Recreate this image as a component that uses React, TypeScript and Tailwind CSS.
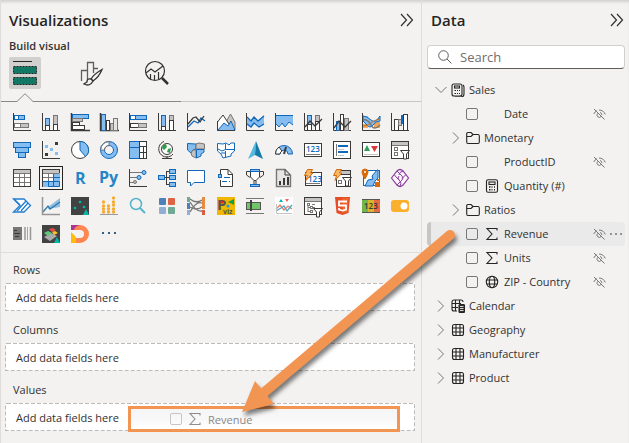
import React, { ReactNode } from "react";

const D = "#3b3a39";
const B = "#1168b8";
const F = "#85bdf0";
const G = "#797775";
const L = "#c6c4c2";
const O = "#d86b08";
const V = "#8b3c9e";

type BoxProps = { x: number; y: number; w: number; h: number; f?: string; s?: string };

/* Rectangle whose 1px outline sits inside its bounds. */
function Box({ x, y, w, h, f = "#fff", s }: BoxProps) {
  return s ? (
    <rect x={x + 0.5} y={y + 0.5} width={w - 1} height={h - 1} fill={f} stroke={s} />
  ) : (
    <rect x={x} y={y} width={w} height={h} fill={f} />
  );
}

function Ln({ d, s = D, f = "none", w = 1 }: { d: string; s?: string; f?: string; w?: number }) {
  return <path d={d} stroke={s} fill={f} strokeWidth={w} />;
}

const Axes = () => <Ln d="M.5 0V17.5H18" />;
const Bolt = () => <Ln d="M3.5 .5H8.5L6.5 4H9L2 11.5L3.5 6.5H.5Z" f="#f7b765" s={O} />;
const Funnel = ({ y = 8 }: { y?: number }) => (
  <Ln d={`M9.5 ${y + 0.5}H18.5L15.5 ${y + 4}V${y + 9}H12.5V${y + 4}Z`} f="#fff" />
);
const Digits = ({ x, y, size, fill }: { x: number; y: number; size: number; fill: string }) => (
  <text x={x} y={y} fontSize={size} fill={fill} fontFamily="Open Sans, sans-serif" fontWeight="600">
    123
  </text>
);

const visuals: [string, ReactNode][] = [
  ["Stacked bar chart", <><Axes /><Box x={1} y={2} w={5} h={5} s={B} /><Box x={5} y={2} w={7} h={5} f={F} s={B} /><Box x={1} y={10} w={7} h={5} s={G} /><Box x={7} y={10} w={9} h={5} f={L} s={G} /></>],
  ["Stacked column chart", <><Axes /><Box x={3} y={5} w={5} h={8} f={F} s={B} /><Box x={3} y={12} w={5} h={6} s={D} /><Box x={11} y={2} w={5} h={10} f={L} s={G} /><Box x={11} y={11} w={5} h={7} s={D} /></>],
  ["Clustered bar chart", <><Ln d="M.5 0V17.5H19" w={1.5} /><Box x={1} y={1} w={17} h={5} f={F} s={B} /><Box x={1} y={5} w={11} h={4} f={L} s={G} /><Box x={1} y={9} w={8} h={4} s={D} /><Box x={1} y={12} w={13} h={5} s={D} /></>],
  ["Clustered column chart", <><Ln d="M.5 0V17.5H19" w={1.5} /><Box x={1} y={1} w={5} h={17} f={F} s={B} /><Box x={6} y={7} w={4} h={11} s={D} /><Box x={10} y={10} w={4} h={8} f={L} s={G} /><Box x={13} y={5} w={5} h={13} f="#e5e4e3" s={G} /></>],
  ["100% stacked bar chart", <><Axes /><Box x={1} y={2} w={6} h={5} s={B} /><Box x={6} y={2} w={12} h={5} f={F} s={B} /><Box x={1} y={10} w={9} h={5} s={D} /><Box x={9} y={10} w={9} h={5} f={L} s={G} /></>],
  ["100% stacked column chart", <><Axes /><Box x={3} y={2} w={5} h={12} f={F} s={B} /><Box x={3} y={13} w={5} h={5} s={D} /><Box x={11} y={2} w={5} h={6} f={L} s={G} /><Box x={11} y={7} w={5} h={11} s={D} /></>],
  ["Line chart", <><Axes /><Ln d="M1 14L7 8L11 10L14 5L18 8" s={B} w={1.3} /><Ln d="M1 11L6 5L9 4L13 9L17 3" w={1.3} /></>],
  ["Area chart", <><Ln d="M9 9L13.5 1L18 9V17.5Z" f={L} s={G} /><Ln d="M.5 17V9L6 2L12 11L17 17.5Z" f="#fff" /><Ln d="M1 17L7 10L11 13L14 8L17.5 16V17.5H1Z" f={F} s={B} /><Ln d="M.5 8V17.5H18" /></>],
  ["Stacked area chart", <><Ln d="M1 5L5 8L8 4L12 8L18 2V11L14 14L8 10L5 14L1 11Z" f={F} s="none" /><Ln d="M1 4L5 8L8 4L12 8L18 3M1 11L5 14L8 10L13 14L18 11" s={B} w={1.3} /><Axes /></>],
  ["100% stacked area chart", <><Ln d="M1 2H18V12L14 9L10 14L6 10L4 14L1 11Z" f={F} s="none" /><Ln d="M1 2.5H18M1 11L4 14L7 10L10 14L14 9L18 12" s={B} /><Axes /></>],
  ["Line and stacked column chart", <><Axes /><Box x={3} y={2} w={5} h={11} f={F} s={B} /><Box x={3} y={11} w={5} h={7} s={D} /><Box x={11} y={2} w={5} h={7} f={L} s={G} /><Box x={11} y={8} w={5} h={10} s={D} /><Ln d="M1 14L6 8L11 13L18 6" w={1.3} /></>],
  ["Line and clustered column chart", <><Axes /><Box x={3} y={8} w={4} h={10} f={F} s={B} /><Box x={7} y={1} w={4} h={17} s={D} /><Box x={11} y={5} w={5} h={13} f={L} s={G} /><Ln d="M1 15L6 8L12 14L18 8" w={1.3} /></>],
  ["Ribbon chart", <><Box x={1} y={3} w={5} h={4} f={L} /><Box x={1} y={11} w={5} h={4} f="#f2a65a" /><Box x={12} y={9} w={6} h={6} f="#f2a65a" /><Ln d="M1 3Q5 3 9 7T18 3V8Q14 8 11 12T5 12L1 8Z" f={F} s={B} /><Ln d="M1 13Q6 13 9 10T18 6" s={O} /><Ln d="M1 7Q6 6 9 12T18 12" s={G} w={1.5} /><Axes /></>],
  ["Waterfall chart", <><Axes /><Box x={3} y={6} w={5} h={12} s={D} /><Box x={7} y={6} w={4} h={7} f={L} s={G} /><Box x={10} y={2} w={3} h={9} f={B} /><Box x={12} y={1} w={5} h={17} s={D} /></>],

  ["Funnel", <><Box x={0} y={1} w={18} h={6} f={F} s={B} /><Box x={2} y={6} w={14} h={6} f={F} s={B} /><Box x={5} y={11} w={8} h={6} f={F} s={B} /></>],
  ["Scatter chart", <><Axes /><Box x={13} y={1} w={3} h={3} f={D} /><Box x={3} y={4} w={3} h={3} f={F} /><Box x={8} y={7} w={3} h={3} f={F} /><Box x={13} y={11} w={3} h={3} f={F} /><Box x={3} y={12} w={3} h={3} f={D} /></>],
  ["Pie chart", <><circle cx="9" cy="9" r="8.5" fill="#fff" stroke={D} /><Ln d="M9 9V.5A8.5 8.5 0 0 1 14.5 15.5Z" f={F} s={B} /></>],
  ["Donut chart", <><circle cx="9" cy="9" r="6.5" fill="none" stroke={F} strokeWidth="4" /><Ln d="M2.5 9A6.5 6.5 0 0 1 9 2.5" s="#fff" w={4} /><circle cx="9" cy="9" r="8.5" fill="none" stroke={B} /><circle cx="9" cy="9" r="4.5" fill="none" stroke={B} /><Ln d="M.5 9A8.5 8.5 0 0 1 9 .5V4.5A4.5 4.5 0 0 0 4.5 9Z" s={G} /></>],
  ["Treemap", <><Box x={0} y={0} w={18} h={18} s={D} /><Box x={0} y={0} w={11} h={7} f={F} s={B} /><Box x={0} y={6} w={11} h={12} f={F} s={B} /><Ln d="M10.5 0V18M10 5.5H18M10 11.5H18M14.5 5V18" /></>],
  ["Map", <><circle cx="9" cy="8" r="5.5" fill="#fff" stroke={D} /><Ln d="M5 4L8 3L9 6L6 9L4 7ZM10 8L13 7L12 12L9 11Z" f="#2e9b4a" s="none" /><Ln d="M6 .5A8 8 0 1 0 15 13M9 15V17.5M4 17.5H14" /></>],
  ["Filled map", <><Ln d="M.5 2.500L9 3V8L6 9L4 12L.5 9Z" f={F} s={B} /><Ln d="M9 3L12 2L17.5 3V8H9ZM4 12L6 9H9V17L5 15Z" f={L} s={G} /><Ln d="M9.5 8.5H17V11L14 13V15L9.5 17Z" f={F} s={B} /></>],
  ["Shape map", <><Ln d="M.5 2.5L6 3L9 2L12 4L14 2H17.5V10L14 13V15L6 17L4 13L.5 10Z" f="#fff" s={B} /><Ln d="M8.5 3V8.5H17M1 8L5 10L8.5 8.5M8.5 10V16M4 12H8" s={B} /></>],
  ["Azure map", <><path d="M10 0L2 18L9 14Z" fill="#55b9df" /><path d="M10 0L17 18L9 14Z" fill="#1679a7" /></>],
  ["Gauge", <><Ln d="M.5 13A8.5 8.5 0 0 1 17.5 13H13A4 4 0 0 0 5 13Z" f={F} s={B} /><Ln d="M.5 13A8.5 8.5 0 0 1 4 6L7 10A4 4 0 0 0 5 13Z" f="#fff" /><Ln d="M11 6L9 13" w={2} /></>],
  ["Card", <><Box x={0} y={2} w={18} h={14} s={D} /><Digits x={2} y={11} size={8} fill={B} /><Ln d="M2 13.5H16" s={G} /></>],
  ["Multi-row card", <><Box x={0} y={0} w={18} h={18} s={D} /><Ln d="M3.5 3V15" s={G} /><Ln d="M5 5H15M5 11H15" s={B} w={2} /><Ln d="M5 8.5H11M5 14.5H11" s={L} /></>],
  ["KPI", <><Box x={0} y={1} w={18} h={15} s={D} /><path d="M2 10H8L5 4Z" fill="#319b58" /><path d="M9 5H16L12.5 11Z" fill="#dc3a3a" /><Ln d="M2 13.5H16" s={L} /></>],
  ["Slicer", <><Box x={0} y={0} w={18} h={18} s={D} /><Box x={1} y={1} w={16} h={3} f={L} /><Ln d="M1 4.5H17" s={G} /><Box x={3} y={6} w={4} h={4} s={G} /><Box x={3} y={11} w={4} h={4} s={G} /><Funnel y={9} /></>],

  ["Table", <><Box x={0} y={0} w={18} h={18} s={D} /><Box x={1} y={1} w={16} h={3} f={L} /><Ln d="M1 4.5H17M1 8.5H17M1 13.5H17M6.5 4V17M11.5 4V17" s={G} /></>],
  ["Matrix", <><Box x={0} y={0} w={18} h={18} s={D} /><Box x={1} y={1} w={16} h={3} f={L} /><Box x={12} y={4} w={6} h={14} f={F} /><Box x={1} y={13} w={17} h={5} f={F} /><Ln d="M1 4.5H17M1 8.5H12M6.5 4V13M11.5 4V13" s={G} /><Ln d="M12 8.5H18M1 12.5H17.5V17.5H6.5V12M11.5 5V17" s={B} /></>],
  ["R script visual", <text x="4" y="15" fontSize="16" fontWeight="700" fill="#2486c8" fontFamily="Open Sans, sans-serif">R</text>],
  ["Python visual", <text x="-1" y="14" fontSize="16" fontWeight="700" fill="#2486c8" fontFamily="Open Sans, sans-serif">Py</text>],
  ["Key influencers", <><Ln d="M.5 0V17.5H18" s={D} /><Ln d="M1 3.5H13M1 8.5H8M1 13.5H5" s={G} /><circle cx="15" cy="3.5" r="2" fill={F} stroke={B} /><circle cx="10" cy="8.5" r="2" fill={F} stroke={B} /><circle cx="6" cy="13" r="1.5" fill={L} stroke={G} /></>],
  ["Decomposition tree", <><Ln d="M6 8.5H11M8.5 2.5V15.5M8 2.5H12M8 15.5H12" /><Box x={0} y={6} w={7} h={5} f={F} s={B} /><Box x={11} y={0} w={7} h={5} f={F} s={B} /><Box x={11} y={6} w={7} h={5} f={F} s={B} /><Box x={11} y={13} w={7} h={5} f={F} s={B} /></>],
  ["Q&A", <Ln d="M.5 1.5H17.5V13.5H7L3.5 17V13.5H.5Z" f="#fff" s={B} />],
  ["Smart narrative", <><Ln d="M3.5 5V.5H11L15.5 5V17.5H3.5V11" f="#fff" /><Ln d="M11 .5V5.5H15" /><Box x={1} y={5} w={4} h={4} f={F} s={B} /><Ln d="M7 8.5H13M5 12.5H10M12 12.5H13" s={B} /></>],
  ["Goals", <><Ln d="M4 2.5H.5V6L4 8.5M14 2.5H17.5V6L14 8.5" /><Ln d="M4.5 1V8L8 11.5H10L13.5 8V1ZM8 11.5V15.5M10 11.5V15.5" f="#fff" /><Box x={4} y={0} w={10} h={3} f={F} s={B} /><Box x={4} y={15} w={10} h={3} f={F} s={B} /></>],
  ["Paginated report", <><Ln d="M1.5 .5H10L15.5 6V17.5H1.5Z" f="#e7e6e5" s={G} w={1.4} /><Ln d="M10 .5V6H15" /><Box x={4} y={12} w={2} h={4} f={D} /><Box x={8} y={9} w={2} h={7} f={D} /><Box x={12} y={8} w={2} h={8} f={D} /></>],
  ["New card", <><Box x={1} y={3} w={17} h={14} s={D} /><Digits x={4} y={13} size={8} fill={B} /><Ln d="M2 14.5H16" s={G} /><Bolt /></>],
  ["New slicer", <><Box x={3} y={1} w={15} h={17} s={D} /><Box x={8} y={2} w={9} h={3} f={L} /><Ln d="M8 5.5H17" /><Box x={5} y={11} w={4} h={4} s={G} /><Funnel /><Bolt /></>],
  ["ArcGIS map", <><Box x={1} y={1} w={17} h={16} s={B} /><Ln d="M15 1L10 7L11 10L6 11L3 17H11L13 12L16 9V1Z" s={B} f={F} /><Ln d="M3 0A3 3 0 0 1 6 3Q6 5 3 10Q0 5 0 3A3 3 0 0 1 3 0Z" s={O} f={O} /><circle cx="3" cy="3" r="1" fill="#fff" /><Box x={13} y={13} w={5} h={5} f={O} /><Box x={15} y={10} w={3} h={2} f={O} /></>],
  ["Power Apps", <><Ln d="M.5 9L6 2Q9 -1 12 2L17.500 9L12 16Q9 19 6 16Z" s={V} w={1.2} f="#faf5fb" /><Ln d="M3.5 6L6 9L9 12Q11 14 9 17M6 2L11 7Q13 9 11 11L6 16M12 2Q8 3 8 6M14.5 6L11 9.5M8 7Q6 9 8 11" s={V} /></>],

  ["Power Automate", <><Ln d="M.5 2H11L17.5 8.5L11 15H.5L7 8.5Z" s="#217dd1" f="#fff" w={1.3} /><Ln d="M4 14L13 4M8 14L15 6M1 2L7 8" s="#217dd1" w={1.3} /></>],
  ["Forecast chart", <><path d="M6 10L18 1V10L6 12Z" fill="#90bfe0" /><Ln d="M1 15L6 9L8 12L18 5" s="#2e77ae" w={1.3} /><Ln d="M.5 0V17.5H18" s="#969696" w={1.5} /></>],
  ["Cluster chart", <><Box x={0} y={0} w={18} h={18} f="#414343" /><circle cx="9" cy="5" r="1.3" fill="#00b8aa" /><circle cx="4" cy="11" r="1.3" fill="#00b8aa" /><circle cx="13" cy="10" r="1.3" fill="#00b8aa" /><path d="M12 18L15 12L18 18Z" fill="#00b8aa" /></>],
  ["Dot column chart", <><g fill="#f4ac35">{[5, 9, 12, 15].map(y => <circle key={y} cx="3.5" cy={y} r="1.7" />)}{[9, 12, 15].map(y => <circle key={y} cx="8.5" cy={y} r="1.7" />)}{[1, 5, 8, 12, 15].map(y => <circle key={y} cx="13.5" cy={y} r="1.7" />)}</g><Ln d="M0 17.5H18" s="#9a9a9a" /></>],
  ["Search visual", <><circle cx="7" cy="7" r="5.500" fill="none" stroke="#54b4cb" strokeWidth="1.5" /><Ln d="M11 11L16 16" s="#54b4cb" w={2} /></>],
  ["Tile grid", <><rect x="1" y="1" width="7" height="7" rx="1" fill="#4f81b8" /><rect x="10" y="1" width="7" height="7" rx="1" fill="#dd6546" /><rect x="1" y="10" width="7" height="7" rx="1" fill="#91afd5" /><rect x="10" y="10" width="7" height="7" rx="1" fill="#6eaa94" /></>],
  ["Sankey diagram", <><Ln d="M3 2Q9 7 15 3M3 5Q9 15 15 14M3 15Q9 4 15 6M3 10Q9 14 15 10" s="#737373" w={1.3} /><Box x={0} y={0} w={3} h={5} f="#6eaa94" /><Box x={0} y={6} w={3} h={6} f="#4f81b8" /><Box x={0} y={13} w={3} h={5} f="#91afd5" /><Box x={15} y={0} w={3} h={12} f="#e78a42" /><Box x={15} y={13} w={3} h={5} f="#d85d42" /></>],
  ["Pviz", <><Box x={0} y={0} w={18} h={18} f="#f1b700" /><text x="0" y="13" fontSize="15" fill="#555" fontFamily="Open Sans, sans-serif" fontWeight="700">P<tspan x="6" y="17" fontSize="7">viz</tspan></text><path d="M11 5L17 2V8Z" fill="#1c9b46" /><circle cx="5" cy="5" r="1.5" fill="#e22" /><circle cx="11" cy="9" r="1.5" fill="#189ee0" /></>],
  ["Bullet chart", <><Ln d="M0 1.5H18M0 16.5H18" s="#777" /><Box x={0} y={5} w={15} h={8} f="#71c668" s="#555" /><Box x={4} y={3} w={2} h={11} f="#444" /></>],
  ["Trend card", <><Box x={0} y={0} w={18} h={18} /><path d="M4 5L6 2L8 5Z" fill="#00b8aa" /><path d="M10 2H14L12 5Z" fill="#fd625e" /><Ln d="M1 12L5 8L9 13L13 9L17 12" s="#e58369" w={1.3} /><Ln d="M1 14L6 11L9 9L12 14L17 8" s="#4ba7c8" w={1.3} /><Ln d="M1.5 7V16.5H17" s={L} /></>],
  ["Hierarchy slicer", <><Box x={0} y={0} w={18} h={18} s={D} /><Box x={1} y={1} w={16} h={3} f={L} /><Ln d="M1 4.5H17M4 8V15M4 10.5H7M4 14.5H7M8 7.5H11M9 10.5H11" s={G} /><Box x={3} y={6} w={3} h={3} s={G} /><Box x={6} y={9} w={3} h={3} s={G} /><Box x={6} y={13} w={3} h={3} s={G} /><Funnel y={11} /></>],
  ["HTML content", <><path d="M2 0H17L15.5 16L9.5 18L3.5 16Z" fill="#e44d26" /><path d="M9.5 1H15.5L14.5 15L9.5 16.5Z" fill="#f16529" /><Ln d="M14 4.5H6V8.5H13V12.5L9.5 13.5L6 12.5V11" s="#fff" w={1.8} /></>],
  ["Heat card", <><Box x={0} y={2} w={6} h={14} f="#70b64c" /><Box x={6} y={2} w={6} h={14} f="#d7b52c" /><Box x={12} y={2} w={6} h={14} f="#e86840" /><Ln d="M0 2.5H18M0 15.5H18" s="#555" /><Digits x={2} y={12} size={8} fill="#383838" /></>],
  ["Toggle", <><rect x="0" y="3" width="18" height="12" rx="3" fill="#fbb02d" /><circle cx="13" cy="9" r="3.5" fill="#fff" /></>],

  ["Text table", <><Box x={0} y={2} w={9} h={13} f="#777" /><Ln d="M1 5.5H4M1 8.5H7M2 11.5H6" s="#383838" /><Ln d="M12 2V15M17.5 2V15" s="#999" w={1.5} /><Ln d="M14.5 2V15" s="#7db8c0" /></>],
  ["Layer map", <><Box x={0} y={0} w={18} h={18} f="#414343" /><path d="M2 12L9 8L15 11L8 16Z" fill="#aaa" /><path d="M2 8L6 6L10 8L6 11Z" fill="#64c67d" /><path d="M7 4L11 3L14 5L10 7Z" fill="#e84a3b" /><path d="M10 7L13 6L16 8L12 10Z" fill="#f3c62d" /><path d="M12 18L15 12L18 18Z" fill="#00b8aa" /></>],
  ["Drill down visual", <><path d="M0 0H9A9 9 0 0 1 9 18H5V13H9A4 4 0 0 0 9 5H0Z" fill="#ff8650" /><path d="M0 0H9Q4 1 3 5H0Z" fill="#a93791" /><path d="M0 7L5 12V18H0Z" fill="#ffbd08" /></>],
  ["Get more visuals", <><Box x={2} y={7} w={2} h={2} f="#365e80" /><Box x={8} y={7} w={2} h={2} f="#365e80" /><Box x={14} y={7} w={2} h={2} f="#365e80" /></>],
];

function Expand() {
  return (
    <button aria-label="Collapse pane" className="h-4 w-4">
      <svg viewBox="0 0 16 16" className="h-4 w-4" fill="none" stroke="#323130" strokeWidth="1.2">
        <path d="M2 2L7.500 8L2 14M8 2L13.5 8L8 14" />
      </svg>
    </button>
  );
}

function Well({ label, children }: { label: string; children?: ReactNode }) {
  return (
    <section className="h-15 pt-[7px]">
      <h3 className="px-2 text-[11px] leading-5">{label}</h3>
      <div className="relative mt-[3px] h-7 bg-white px-[11px] text-[11px] leading-[29px]">
        <svg className="absolute inset-0 h-full w-full" aria-hidden="true">
          <rect x="0" y="0" width="100%" height="100%" rx="2" fill="none" stroke="#bdbbb9" strokeWidth="2" strokeDasharray="4 2" />
        </svg>
        Add data fields here
        {children}
      </div>
    </section>
  );
}

type IconName = "model" | "folder" | "calc" | "sum" | "globe" | "table" | "calendar";

const treePaths: Record<IconName, ReactNode> = {
  model: <><rect x="1" y="1" width="10" height="12" rx="2" /><rect x="3.5" y="3" width="5" height="2" /><path d="M3.5 7.5H5M6 7.5H7M8 7.5H9M3.5 10.5H5M6 10.5H7M8 10.5H9M12 2Q13 3 13 4V11Q13 14 10 14H4" /></>,
  folder: <path d="M.7 4V2.5Q.7 1.5 2 1.5H5L7 3.5H12Q13.3 3.5 13.3 5V11Q13.3 12.5 12 12.5H2Q.7 12.5 .7 11ZM1 5.5H5L7 3.5" />,
  calc: <><rect x="1.5" y=".7" width="11" height="12.6" rx="1.5" /><rect x="4" y="3" width="6" height="2.5" /><path d="M4 8H5.5M6.500 8H7.5M9 8H10M4 10.8H5.5M6.5 10.8H7.5M9 10.8H10" strokeWidth="1.5" /></>,
  sum: <path d="M12 3.5V1.5H2L7 7L2 12.5H12V10.5" />,
  globe: <><circle cx="7" cy="7" r="5.7" /><ellipse cx="7" cy="7" rx="2.7" ry="5.7" /><path d="M1.5 5H12.5M1.5 9H12.5" /></>,
  table: <><rect x="1.5" y="1.5" width="11" height="11" rx="2" /><path d="M5 1.5V12.5M9 1.5V12.5M1.5 5H12.5M1.5 9H12.5" /></>,
  calendar: <><path d="M6 12H3Q1 12 1 10V3Q1 1 3 1H10Q12 1 12 3M4.5 1V12M8.5 1V5M1 4.5H10M1 8.5H7" /><rect x="8" y="5.5" width="5.5" height="8" rx="1" fill="#323130" /><path d="M9 7.5H12.5M9 9.5H12.5M9 11.5H12.5" stroke="#fff" strokeWidth=".8" /></>,
};

function TreeIcon({ name }: { name: IconName }) {
  return (
    <svg viewBox="0 0 14 14" className="h-3.5 w-3.5 shrink-0" fill="none" stroke="#252423" strokeWidth="1.1">
      {treePaths[name]}
    </svg>
  );
}

function Chevron({ open = false }: { open?: boolean }) {
  return (
    <svg viewBox="0 0 12 12" className="h-3 w-3 shrink-0" fill="none" stroke="#797775">
      <path d={open ? "M.5 3L6 8.5L11.5 3" : "M3 .5L8.5 6L3 11.5"} />
    </svg>
  );
}

function Branch({ label, icon, nested, open }: { label: string; icon: IconName; nested?: boolean; open?: boolean }) {
  return (
    <li>
      <button aria-expanded={!!open} className={`flex h-6 w-full items-center gap-1 text-left ${nested ? "pl-[23px]" : "pl-2"}`}>
        <Chevron open={open} />
        <TreeIcon name={icon} />
        <span>{label}</span>
      </button>
    </li>
  );
}

function HiddenEye() {
  return (
    <svg viewBox="0 0 13 12" className="h-3 w-[13px]" fill="none" stroke="#797775" aria-label="Hidden">
      <path d="M1 1L11.5 11.5M.7 6Q2 3.5 4 2.7M6 2Q10.5 2 12.3 6.5M4.5 5.5A2.3 2.3 0 0 0 8 8.5M7 4.5Q9 5 9 7" />
    </svg>
  );
}

function Field({ label, icon, hidden, active }: { label: string; icon?: IconName; hidden?: boolean; active?: boolean }) {
  return (
    <li className={`flex h-6 items-center rounded-sm ${active ? "border-l-4 border-[#c8c6c4] bg-[#eaeaea] pl-[35px]" : "pl-[39px]"}`}>
      <label className="flex flex-1 items-center">
        <input type="checkbox" className="h-3 w-3 shrink-0 appearance-none rounded-xs border border-[#797775]" />
        <span className="ml-[7px] mr-[5px] flex w-3.5">{icon && <TreeIcon name={icon} />}</span>
        <span>{label}</span>
      </label>
      <span className="flex w-8 items-center gap-1">
        {hidden && <HiddenEye />}
        {active && (
          <button aria-label="More options">
            <svg viewBox="0 0 12 4" className="h-1 w-3" fill="#797775">
              <circle cx="1" cy="2" r="1" /><circle cx="6" cy="2" r="1" /><circle cx="11" cy="2" r="1" />
            </svg>
          </button>
        )}
      </span>
    </li>
  );
}

export default function App() {
  return (
    <main className="relative flex min-h-screen bg-[#f3f2f1] font-['Open_Sans','Noto_Sans',sans-serif] text-[#323130] shadow-[inset_0_3px_3px_-1px_#d2d0ce]">
      <section className="min-w-0 flex-1 border-x border-[#dfdddb]">
        <header className="flex h-9 items-center justify-between pl-2 pr-1.5 pt-1">
          <h2 className="text-[15px] font-semibold text-[#252423]">Visualizations</h2>
          <Expand />
        </header>
        <h3 className="h-5 pl-2 text-[11px] font-semibold leading-5">Build visual</h3>
        <nav className="mt-px flex gap-8 pl-2">
          <button aria-label="Build visual" className="h-8 w-8 rounded-xs bg-[#d2d0ce]">
            <svg viewBox="0 0 32 32" className="h-8 w-8">
              <path d="M4 4.5H23" stroke="#252423" />
              <rect x="4.5" y="9.5" width="23" height="7" fill="#117865" stroke="#252423" strokeDasharray="2 1" />
              <rect x="4.5" y="20.5" width="23" height="7" fill="#117865" stroke="#252423" strokeDasharray="2 1" />
            </svg>
          </button>
          <button aria-label="Format visual" className="h-8 w-8">
            <svg viewBox="0 0 32 32" className="h-8 w-8" fill="none" stroke="#605e5c" strokeWidth="1.3">
              <path d="M8.5 24V13.5H14.5V25M14.5 13V5.5H20.5V16M20.5 11.5H25" />
              <path d="M29 12.5Q21 17 18 22L20 24Q26 20 29 12.5Z" fill="#f3f2f1" stroke="#323130" />
              <path d="M18 22Q14 21 14 25L11 27Q17 30 20 24Z" fill="#f3f2f1" stroke="#323130" />
            </svg>
          </button>
          <button aria-label="Analytics" className="h-8 w-8">
            <svg viewBox="0 0 32 32" className="h-8 w-8" fill="none" stroke="#323130" strokeWidth="1.2">
              <circle cx="18" cy="14" r="9.5" />
              <path d="M9 16L14 12L18 15L26 9M13.5 17V22M17.5 18V23M21.5 15V22" />
              <path d="M25 21L31 27" strokeWidth="2.5" />
            </svg>
          </button>
        </nav>
        <div className="mt-1 flex h-[9px] items-end">
          <span className="h-px w-4 bg-[#8a8886]" />
          <svg viewBox="0 0 16 9" className="h-[9px] w-4" fill="none" stroke="#8a8886"><path d="M0 8.5L8 .7L16 8.5" /></svg>
          <span className="h-px w-37 bg-[#8a8886]" />
          <span className="h-px flex-1 bg-[#c8c6c4]" />
        </div>
        <div className="mt-1.5 grid grid-cols-14 px-1.5 pb-1">
          {visuals.map(([name, art]) => (
            <button key={name} aria-label={name} title={name} className="flex h-7 items-center justify-center">
              <span className={name === "Matrix" ? "border border-[#252423] p-0.5" : ""}>
                <svg viewBox="0 0 18 18" className="h-[18px] w-[18px] overflow-visible">{art}</svg>
              </span>
            </button>
          ))}
        </div>
        <div className="border-t border-[#dfdddb] pl-1 pr-1.5">
          <Well label="Rows" />
          <Well label="Columns" />
          <Well label="Values">
            <div className="absolute left-[123px] right-[15px] top-[3px] flex h-[26px] items-center border-3 border-[#f39552] bg-linear-to-b from-[#f5f5f5] via-[#f8f8f8] to-white pl-[39px] text-[#8a8886]">
              <input type="checkbox" aria-label="Revenue" className="h-3 w-3 appearance-none rounded-xs border border-[#c8c6c4]" />
              <span className="mx-1.5 opacity-50"><TreeIcon name="sum" /></span>
              Revenue
            </div>
          </Well>
        </div>
      </section>

      <aside className="w-[207px] shrink-0 pl-[5px] pr-1 text-[11px]">
        <header className="flex h-9 items-center justify-between pl-1 pt-1">
          <h2 className="text-[15px] font-semibold text-[#252423]">Data</h2>
          <Expand />
        </header>
        <label className="mt-[9px] flex h-6 items-center gap-2 rounded-sm border border-[#d2d0ce] border-b-[#605e5c] bg-white px-2.5">
          <svg viewBox="0 0 14 14" className="h-3.5 w-3.5 shrink-0" fill="none" stroke="#605e5c">
            <circle cx="5.5" cy="5.5" r="4.8" /><path d="M9 9L13.5 13.5" />
          </svg>
          <input type="search" aria-label="Search" placeholder="Search" className="w-full min-w-0 text-[13px] leading-5 outline-none placeholder:text-[#706e6c]" />
        </label>
        <ul className="mt-[9px]">
          <Branch label="Sales" icon="model" open />
          <Field label="Date" hidden />
          <Branch label="Monetary" icon="folder" nested />
          <Field label="ProductID" hidden />
          <Field label="Quantity (#)" icon="calc" />
          <Branch label="Ratios" icon="folder" nested />
          <Field label="Revenue" icon="sum" hidden active />
          <Field label="Units" icon="sum" hidden />
          <Field label="ZIP - Country" icon="globe" hidden />
          <Branch label="Calendar" icon="calendar" />
          <Branch label="Geography" icon="table" />
          <Branch label="Manufacturer" icon="table" />
          <Branch label="Product" icon="table" />
        </ul>
      </aside>

      <svg viewBox="0 0 220 190" className="pointer-events-none absolute right-[170px] top-[227px] h-[190px] w-[220px] overflow-visible drop-shadow-[2px_4px_2px_rgba(0,0,0,0.5)]" aria-hidden="true">
        <path d="M211 8L22 168" stroke="#f39552" strokeWidth="10" strokeLinecap="round" />
        <path d="M3 185L16 154L35 177Z" fill="#f39552" />
      </svg>
    </main>
  );
}
